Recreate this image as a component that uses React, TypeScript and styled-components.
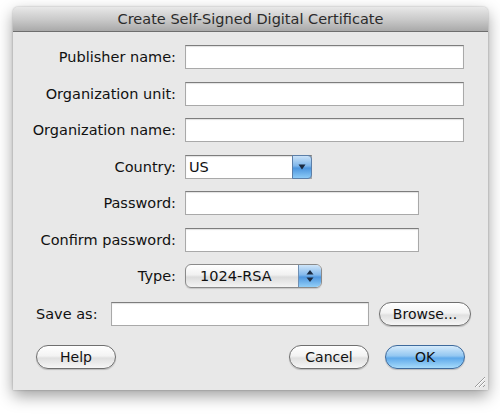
import React from 'react';
import styled, { createGlobalStyle } from 'styled-components';

const GlobalStyle = createGlobalStyle`
  html, body {
    margin: 0;
    padding: 0;
    background: #ffffff;
  }
  body {
    font-family: "DejaVu Sans", "Liberation Sans", sans-serif;
  }
`;

const Page = styled.div`
  width: 500px;
  height: 416px;
  padding: 7px 0 0 13px;
  box-sizing: border-box;
`;

const Window = styled.div`
  position: relative;
  width: 475px;
  height: 383px;
  background: #e8e8e8;
  border-radius: 5px 5px 0 0;
  box-shadow: 0 6px 16px rgba(0, 0, 0, 0.38), 0 0 2px rgba(0, 0, 0, 0.3);
  display: flex;
  flex-direction: column;
`;

const TitleBar = styled.div`
  height: 25px;
  border-radius: 5px 5px 0 0;
  background: linear-gradient(#e8e8e8, #c8c8c8 55%, #a9a9a9);
  border-bottom: 1px solid #6e6e6e;
  box-sizing: border-box;
  display: flex;
  align-items: center;
  justify-content: center;
  font-size: 14.5px;
  color: #2b2b2b;
`;

const Body = styled.div`
  flex: 1;
  display: flex;
  flex-direction: column;
  padding: 13px 0 0 0;
`;

const Form = styled.div`
  display: flex;
  flex-direction: column;
  gap: 12.5px;
`;

const Row = styled.div`
  display: flex;
  align-items: center;
  height: 24px;
`;

const Label = styled.label`
  width: 163px;
  margin-right: 9px;
  text-align: right;
  font-size: 14.5px;
  color: #111;
  white-space: nowrap;
`;

const Field = styled.div<{ $w: number }>`
  flex-shrink: 0;
  width: ${(p) => p.$w}px;
  height: 24px;
  box-sizing: border-box;
  background: #fff;
  border: 1px solid #a9a9a9;
  border-top-color: #7d7d7d;
  box-shadow: inset 0 1px 1px rgba(0, 0, 0, 0.12);
  display: flex;
  align-items: center;
  padding-left: 3px;
  font-size: 14.5px;
  color: #111;
`;

const ComboBox = styled(Field)`
  position: relative;
  padding-right: 20px;
`;

const ComboArrow = styled.div`
  position: absolute;
  top: -1px;
  right: -1px;
  width: 20px;
  height: 24px;
  border-radius: 0 4px 4px 0;
  background: linear-gradient(#c9e2f8, #7fb6ea 45%, #4c95de 55%, #8ccaf6);
  border: 1px solid #5c7fa8;
  box-sizing: border-box;
  display: flex;
  align-items: center;
  justify-content: center;
`;

const PopUp = styled.div<{ $w: number }>`
  position: relative;
  width: ${(p) => p.$w}px;
  height: 24px;
  box-sizing: border-box;
  border: 1px solid #8a8a8a;
  border-radius: 6px;
  background: linear-gradient(#ffffff, #f1f1f1 45%, #dcdcdc 55%, #f4f4f4);
  box-shadow: 0 1px 1px rgba(0, 0, 0, 0.15);
  display: flex;
  align-items: center;
  padding-left: 14px;
  font-size: 14.5px;
  color: #111;
  overflow: hidden;
`;

const PopUpArrows = styled.div`
  position: absolute;
  top: 0;
  right: 0;
  bottom: 0;
  width: 22px;
  background: linear-gradient(#cfe5f9, #83b9ec 45%, #4f97df 55%, #93cff7);
  border-left: 1px solid #6f8fb3;
  display: flex;
  align-items: center;
  justify-content: center;
`;

const SaveRow = styled.div`
  display: flex;
  align-items: center;
  height: 24px;
  margin-top: 14px;
  padding-left: 23px;
`;

const SaveLabel = styled.label`
  width: 75px;
  flex-shrink: 0;
  font-size: 14.5px;
  color: #111;
`;

const ButtonRow = styled.div`
  display: flex;
  align-items: center;
  margin-top: 19px;
  padding: 0 23px;
`;

const Spacer = styled.div`
  flex: 1;
`;

const Button = styled.button<{ $primary?: boolean; $w?: number; $gap?: number }>`
  flex-shrink: 0;
  width: ${(p) => p.$w ?? 80}px;
  height: 24px;
  border-radius: 12px;
  border: 1px solid ${(p) => (p.$primary ? '#3e6a9c' : '#6f6f6f')};
  background: ${(p) =>
    p.$primary
      ? 'linear-gradient(#d5eafb, #93c7f1 45%, #5fa9ea 55%, #a6dbfb)'
      : 'linear-gradient(#ffffff, #f3f3f3 45%, #e0e0e0 55%, #f6f6f6)'};
  box-shadow: 0 1px 1px rgba(0, 0, 0, 0.2);
  font-family: "DejaVu Sans", "Liberation Sans", sans-serif;
  font-size: 14px;
  color: #111;
  padding: 0;
  margin-left: ${(p) => p.$gap ?? 0}px;
  cursor: pointer;
`;

const Grip = styled.svg`
  position: absolute;
  right: 2px;
  bottom: 2px;
`;

export default function App() {
  return (
    <Page>
      <GlobalStyle />
      <Window>
        <TitleBar>Create Self-Signed Digital Certificate</TitleBar>
        <Body>
          <Form>
            <Row>
              <Label>Publisher name:</Label>
              <Field $w={279} />
            </Row>
            <Row>
              <Label>Organization unit:</Label>
              <Field $w={279} />
            </Row>
            <Row>
              <Label>Organization name:</Label>
              <Field $w={279} />
            </Row>
            <Row>
              <Label>Country:</Label>
              <ComboBox $w={127}>
                US
                <ComboArrow>
                  <svg width="8" height="6" viewBox="0 0 8 6">
                    <path d="M0.5 0.5 L7.5 0.5 L4 5.5 Z" fill="#1a2a40" />
                  </svg>
                </ComboArrow>
              </ComboBox>
            </Row>
            <Row>
              <Label>Password:</Label>
              <Field $w={234} />
            </Row>
            <Row>
              <Label>Confirm password:</Label>
              <Field $w={234} />
            </Row>
            <Row>
              <Label>Type:</Label>
              <PopUp $w={137}>
                1024-RSA
                <PopUpArrows>
                  <svg width="8" height="14" viewBox="0 0 8 14">
                    <path d="M4 1 L7.5 5.5 L0.5 5.5 Z" fill="#1a2a40" />
                    <path d="M0.5 8.5 L7.5 8.5 L4 13 Z" fill="#1a2a40" />
                  </svg>
                </PopUpArrows>
              </PopUp>
            </Row>
          </Form>
          <SaveRow>
            <SaveLabel>Save as:</SaveLabel>
            <Field $w={258} />
            <Button $w={92} $gap={10}>Browse...</Button>
          </SaveRow>
          <ButtonRow>
            <Button>Help</Button>
            <Spacer />
            <Button>Cancel</Button>
            <Button $primary $gap={16}>OK</Button>
          </ButtonRow>
        </Body>
        <Grip width="14" height="14" viewBox="0 0 14 14">
          <path d="M13 3 L3 13 M13 7 L7 13 M13 11 L11 13" stroke="#9a9a9a" strokeWidth="1" />
          <path d="M13 4 L4 13 M13 8 L8 13" stroke="#ffffff" strokeWidth="1" />
        </Grip>
      </Window>
    </Page>
  );
}
